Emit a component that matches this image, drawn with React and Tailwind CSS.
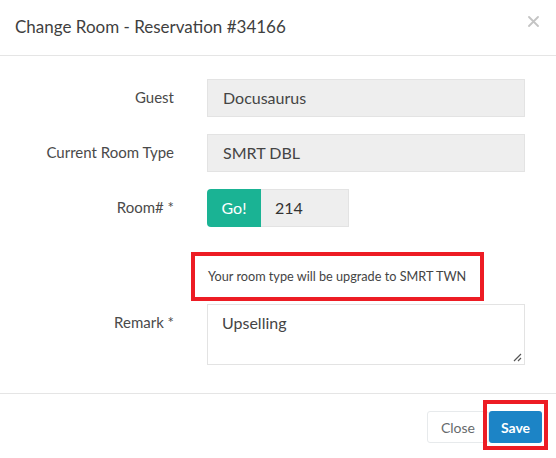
import React from "react";

export default function App() {
  const font = { fontFamily: "Lato, 'Open Sans', sans-serif" };
  return (
    <div className="w-[556px] h-[458px] bg-white relative overflow-hidden" style={font}>
      {/* Header */}
      <div className="h-[56px] flex items-center justify-between pl-[15px] pr-[17px] border-b border-[#e5e5e5]">
        <div className="text-[17px] text-[#3f3f3f] leading-none pb-[2px]">Change Room - Reservation #34166</div>
        <svg width="11" height="11" viewBox="0 0 11 11" className="mb-[12px]">
          <path d="M1 1 L10 10 M10 1 L1 10" stroke="#c4c4c4" strokeWidth="1.8" strokeLinecap="round" />
        </svg>
      </div>

      {/* Body */}
      <div className="pt-[23px] pb-[28px] h-[338px] border-b border-[#e5e5e5] box-border">
        <div className="flex items-start">
          <div className="w-[174px] text-right text-[15px] text-[#4a4a4a] leading-[20px] pt-[8px]">Guest</div>
          <div className="ml-[33px] w-[318px] h-[38px] bg-[#eeeeee] border border-[#e3e3e3] flex items-center pl-[15px] text-[16px] text-[#444]">
            Docusaurus
          </div>
        </div>
        <div className="flex items-start mt-[17px]">
          <div className="w-[174px] text-right text-[15px] text-[#4a4a4a] leading-[20px] pt-[8px]">Current Room Type</div>
          <div className="ml-[33px] w-[318px] h-[38px] bg-[#eeeeee] border border-[#e3e3e3] flex items-center pl-[15px] text-[16px] text-[#444]">
            SMRT DBL
          </div>
        </div>
        <div className="flex items-start mt-[17px]">
          <div className="w-[174px] text-right text-[15px] text-[#4a4a4a] leading-[20px] pt-[8px]">Room# *</div>
          <div className="ml-[33px] flex h-[38px]">
            <div className="w-[54px] h-[38px] bg-[#1ab394] rounded-l-[4px] flex items-center justify-center text-white text-[16px]">
              Go!
            </div>
            <div className="w-[88px] h-[38px] bg-[#eeeeee] border border-[#e3e3e3] border-l-0 flex items-center pl-[14px] text-[16px] text-[#333]">
              214
            </div>
          </div>
        </div>
        <div className="mt-[25px] ml-[191px] w-[293px] h-[49px] border-[4px] border-[#ed1c24] flex items-center pl-[13px] text-[12.7px] text-[#444]">
          Your room type will be upgrade to SMRT TWN
        </div>
        <div className="flex items-start mt-[3px]">
          <div className="w-[174px] text-right text-[15px] text-[#4a4a4a] leading-[20px] pt-[8px]">Remark *</div>
          <div className="ml-[33px] w-[318px] h-[61px] bg-white border border-[#e3e3e3] relative pl-[14px] pt-[6px] text-[16px] text-[#444]">
            Upselling
            <svg width="9" height="9" viewBox="0 0 9 9" className="absolute right-[2px] bottom-[2px]">
              <path d="M8 1 L1 8 M8 5 L5 8" stroke="#555" strokeWidth="1.2" />
            </svg>
          </div>
        </div>
      </div>

      {/* Footer */}
      <div className="flex justify-end items-start pt-[17px] pr-[14px]">
        <div className="w-[62px] h-[32px] border border-[#e7eaec] rounded-[3px] bg-white flex items-center justify-center text-[14px] text-[#676a6c]">
          Close
        </div>
        <div className="relative">
          <div className="w-[53px] h-[32px] rounded-[3px] bg-[#1c84c6] flex items-center justify-center text-[14px] font-bold text-white">
            Save
          </div>
          <div className="absolute left-[-6px] top-[-11px] w-[65px] h-[50px] border-[4px] border-[#ed1c24] pointer-events-none" />
        </div>
      </div>
    </div>
  );
}
